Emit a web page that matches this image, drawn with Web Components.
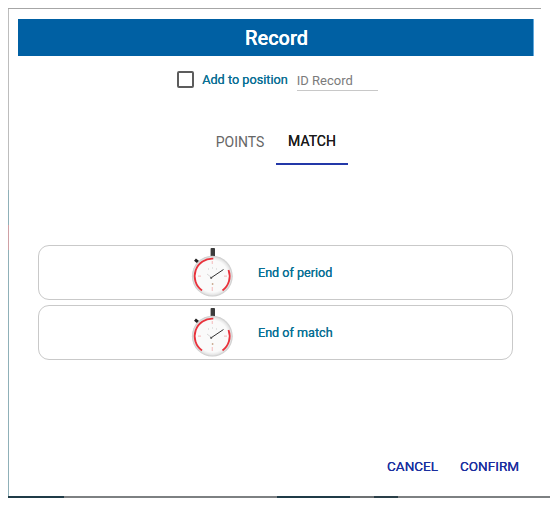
<!DOCTYPE html>
<html>
<head>
<meta charset="utf-8">
<title>Record</title>
<style>
	html, body { margin: 0; padding: 0; background: #fff; }
	body { width: 550px; height: 506px; overflow: hidden; font-family: Roboto, "Liberation Sans", sans-serif; }
</style>
</head>
<body>
<record-dialog>
	<span slot="title">Record</span>
	<record-option slot="top" label="Add to position" placeholder="ID Record"></record-option>
	<record-tabs slot="tabs"></record-tabs>
	<event-row>End of period</event-row>
	<event-row>End of match</event-row>
	<span slot="cancel">CANCEL</span>
	<span slot="confirm">CONFIRM</span>
</record-dialog>

<script>
const dialogTemplate = document.createElement("template");
dialogTemplate.innerHTML = `
	<style>
	:host {
		box-sizing: border-box;
		width: 542px;
		height: 490px;
		margin: 8px 0 0 8px;
		padding: 0 16px 2px 10px;
		display: flex;
		flex-direction: column;
		text-shadow: 0 0 0.6px currentColor;
		background:
			linear-gradient(to right, #1f3b47 0 56px, #7d8082 56px 269px, #1f3b47 269px 342px, #6d7173 342px 366px, #2a3f48 366px 390px, #7d8082 390px) left bottom / 100% 2px no-repeat,
			linear-gradient(to bottom, #bdbdbd 0 182px, #8fb0b8 182px 217px, #cfa0a4 217px 242px, #8fb0b8 242px) left top / 1px 100% no-repeat,
			#fff;
	}
	.edge {
		flex: none;
		width: 533px;
		height: 1px;
		margin: 0 0 10px -10px;
		background: #a6a6a6;
	}
	.title {
		box-sizing: border-box;
		height: 37px;
		flex: none;
		display: flex;
		align-items: center;
		justify-content: center;
		padding-left: 2px;
		background: #0060a3;
		border-right: 1px solid #5fa8dd;
		color: #fff;
		font-size: 20px;
		font-weight: 500;
	}
	.events {
		display: flex;
		flex-direction: column;
		gap: 5px;
		margin: 80px 21px 0 20px;
	}
	.actions {
		margin-top: auto;
		display: flex;
		justify-content: flex-end;
		gap: 22px;
		padding: 0 15px 22px 0;
		color: #1b2e9e;
		font-size: 13.5px;
	}
	</style>
	<div class="edge"></div>
	<div class="title"><slot name="title"></slot></div>
	<slot name="top"></slot>
	<slot name="tabs"></slot>
	<div class="events"><slot></slot></div>
	<div class="actions">
		<slot name="cancel"></slot>
		<slot name="confirm"></slot>
	</div>
`;

class RecordDialog extends HTMLElement {
	constructor() {
		super();
		this.attachShadow({ mode: "open" });
		this.shadowRoot.appendChild(dialogTemplate.content.cloneNode(true));
	}
}

const optionTemplate = document.createElement("template");
optionTemplate.innerHTML = `
	<style>
	:host {
		display: flex;
		align-items: center;
		justify-content: center;
		height: 33px;
		margin-top: 7px;
		padding-left: 3px;
		font-size: 13px;
	}
	.box {
		width: 13px;
		height: 13px;
		border: 2px solid #5c5c5c;
		border-radius: 2px;
	}
	.label {
		margin-left: 8px;
		color: #0b6f94;
		font-size: 12.7px;
	}
	.field {
		box-sizing: border-box;
		width: 81px;
		height: 23px;
		margin: 0 0 0 9px;
		padding: 4px 0 0 0;
		color: #7b7b7b;
		text-shadow: none;
		border-bottom: 1px solid #c8c8c8;
		line-height: 18px;
	}
	</style>
	<span class="box"></span>
	<span class="label"></span>
	<span class="field"></span>
`;

class RecordOption extends HTMLElement {
	constructor() {
		super();
		this.attachShadow({ mode: "open" });
		this.shadowRoot.appendChild(optionTemplate.content.cloneNode(true));
		this.shadowRoot.querySelector(".label").innerText = this.getAttribute("label");
		this.shadowRoot.querySelector(".field").innerText = this.getAttribute("placeholder");
	}
}

const tabsTemplate = document.createElement("template");
tabsTemplate.innerHTML = `
	<style>
	:host {
		display: flex;
		justify-content: center;
		margin-top: 23px;
		font-size: 14px;
	}
	.tab {
		box-sizing: border-box;
		width: 72px;
		height: 46px;
		display: flex;
		align-items: center;
		justify-content: center;
		color: #666;
		text-shadow: none;
	}
	.active {
		color: #1b1b1b;
		text-shadow: 0 0 0.6px currentColor;
		border-bottom: 2px solid #2338a8;
	}
	</style>
	<div class="tab">POINTS</div>
	<div class="tab active">MATCH</div>
`;

class RecordTabs extends HTMLElement {
	constructor() {
		super();
		this.attachShadow({ mode: "open" });
		this.shadowRoot.appendChild(tabsTemplate.content.cloneNode(true));
	}
}

const rowTemplate = document.createElement("template");
rowTemplate.innerHTML = `
	<style>
	:host {
		display: flex;
		box-sizing: border-box;
		height: 55px;
		align-items: center;
		border: 1px solid #c9c9c9;
		border-radius: 11px;
		padding-left: 152px;
		color: #0b6f94;
		font-size: 12.6px;
	}
	svg { width: 44px; height: 52px; flex: none; filter: blur(0.35px); }
	.text { margin-left: 23px; }
	</style>
	<svg viewBox="0 0 44 52" aria-hidden="true">
		<defs>
			<radialGradient id="face">
				<stop offset="0.78" stop-color="#fafafa"/>
				<stop offset="0.9" stop-color="#e8e8e8"/>
				<stop offset="1" stop-color="#c8c8c8"/>
			</radialGradient>
		</defs>
		<rect x="19.6" y="1" width="4.4" height="9" rx="0.8" fill="#3c3c3c"/>
		<rect x="20.4" y="9.5" width="2.8" height="2" fill="#b5b5b5"/>
		<path d="M4 12.6 L7.4 15.4" stroke="#222" stroke-width="3"/>
		<path d="M7.4 15.4 L9.5 17" stroke="#aaa" stroke-width="1.4"/>
		<circle cx="21.3" cy="29.2" r="20.4" fill="url(#face)"/>
		<path d="M22.3 11.7 A17.5 17.5 0 0 0 11 43.4" fill="none" stroke="#e9323c" stroke-width="1.8"/>
		<path d="M37.5 23 A17.5 17.5 0 0 1 31.5 43.4" fill="none" stroke="#e9323c" stroke-width="1.8"/>
		<path d="M21.3 14v3M21.3 40v4M7 29.2h3M33 29.2h3" stroke="#f6c4c4" stroke-width="1.2"/>
		<path d="M19.8 31 L32.5 22.5" stroke="#333" stroke-width="1"/>
		<path d="M20.5 30.5 L16 27" stroke="#d4d4d4" stroke-width="0.9"/>
		<circle cx="20.2" cy="30.8" r="1.1" fill="#555"/>
		<circle cx="21.6" cy="37" r="0.9" fill="#c7a98e"/>
		<path d="M17 22h.8M21 21h.8M25 22h.8" stroke="#bbb" stroke-width="0.9"/>
	</svg>
	<span class="text"><slot></slot></span>
`;

class EventRow extends HTMLElement {
	constructor() {
		super();
		this.attachShadow({ mode: "open" });
		this.shadowRoot.appendChild(rowTemplate.content.cloneNode(true));
	}
}

customElements.define("record-dialog", RecordDialog);
customElements.define("record-option", RecordOption);
customElements.define("record-tabs", RecordTabs);
customElements.define("event-row", EventRow);
</script>
</body>
</html>
